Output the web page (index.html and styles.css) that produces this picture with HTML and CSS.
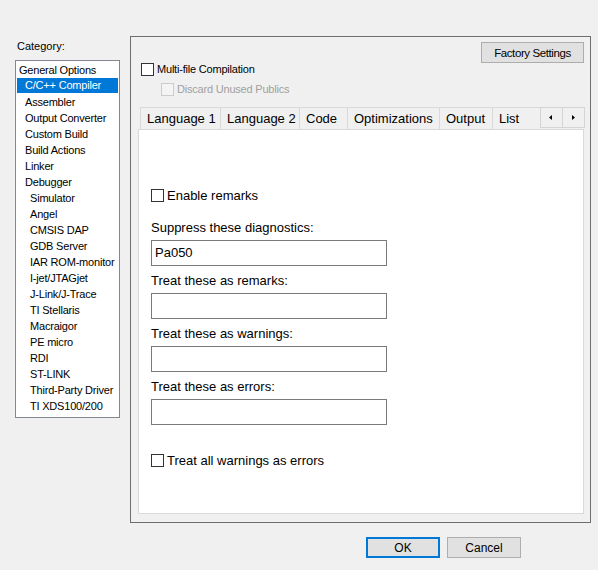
FILE: index.html
```html
<!DOCTYPE html>
<html lang="en">
<head>
  <meta charset="UTF-8" />
  <title>Options for node</title>
  <link rel="stylesheet" href="styles.css">
</head>
<body>
  <div class="dialog">
    <div class="top">
      <div class="category">
        <div class="category-label">Category:</div>
        <ul class="category-list">
          <li>General Options</li>
          <li class="sub selected">C/C++ Compiler</li>
          <li class="sub">Assembler</li>
          <li class="sub">Output Converter</li>
          <li class="sub">Custom Build</li>
          <li class="sub">Build Actions</li>
          <li class="sub">Linker</li>
          <li class="sub">Debugger</li>
          <li class="subsub">Simulator</li>
          <li class="subsub">Angel</li>
          <li class="subsub">CMSIS DAP</li>
          <li class="subsub">GDB Server</li>
          <li class="subsub">IAR ROM-monitor</li>
          <li class="subsub">I-jet/JTAGjet</li>
          <li class="subsub">J-Link/J-Trace</li>
          <li class="subsub">TI Stellaris</li>
          <li class="subsub">Macraigor</li>
          <li class="subsub">PE micro</li>
          <li class="subsub">RDI</li>
          <li class="subsub">ST-LINK</li>
          <li class="subsub">Third-Party Driver</li>
          <li class="subsub">TI XDS100/200</li>
        </ul>
      </div>

      <div class="panel">
        <div class="panel-head">
          <button class="btn factory">Factory Settings</button>
        </div>
        <label class="check small">
          <span class="box"></span>Multi-file Compilation
        </label>
        <label class="check small disabled indent">
          <span class="box"></span>Discard Unused Publics
        </label>

        <div class="tabs">
          <div class="tab-strip">
            <div class="tab w-lang1">Language 1</div>
            <div class="tab w-lang2">Language 2</div>
            <div class="tab w-code">Code</div>
            <div class="tab w-opt">Optimizations</div>
            <div class="tab w-out">Output</div>
            <div class="tab w-list">List</div>
          </div>
          <div class="tab-arrows">
            <span class="arrow">
              <svg width="5" height="5" viewBox="0 0 5 5"><path d="M3 0 L0 2.5 L3 5 Z" fill="#000"/></svg>
            </span>
            <span class="arrow">
              <svg width="5" height="5" viewBox="0 0 5 5"><path d="M1 0 L4 2.5 L1 5 Z" fill="#000"/></svg>
            </span>
          </div>
        </div>

        <div class="tab-page">
          <label class="check first">
            <span class="box"></span>Enable remarks
          </label>

          <div class="field">
            <div class="field-label">Suppress these diagnostics:</div>
            <div class="field-input">Pa050</div>
          </div>
          <div class="field">
            <div class="field-label">Treat these as remarks:</div>
            <div class="field-input"></div>
          </div>
          <div class="field">
            <div class="field-label">Treat these as warnings:</div>
            <div class="field-input"></div>
          </div>
          <div class="field">
            <div class="field-label">Treat these as errors:</div>
            <div class="field-input"></div>
          </div>

          <label class="check last">
            <span class="box"></span>Treat all warnings as errors
          </label>
        </div>
      </div>
    </div>

    <div class="actions">
      <button class="btn ok">OK</button>
      <button class="btn">Cancel</button>
    </div>
  </div>
</body>
</html>
```

FILE: styles.css
```css
* {
  margin: 0;
  padding: 0;
  box-sizing: border-box;
  font-family: 'Liberation Sans', Arial, sans-serif;
}

body {
  width: 598px;
  height: 570px;
  background-color: #f0f0f0;
  color: #000;
  overflow: hidden;
}

.dialog {
  padding-top: 36px;
}

.top {
  display: flex;
  padding-left: 15px;
}

/* category list */
.category {
  width: 105px;
  margin-right: 10px;
  padding-top: 2px;
}

.category-label {
  font-size: 11px;
  line-height: 16px;
  padding-left: 2px;
  margin-bottom: 6px;
}

.category-list {
  list-style: none;
  background-color: #fff;
  border: 1px solid #828790;
  height: 358px;
  padding: 1px 1px 0 1px;
}

.category-list li {
  font-size: 11px;
  letter-spacing: -0.2px;
  line-height: 16px;
  height: 16px;
  padding-left: 2px;
  white-space: nowrap;
}

.category-list li.sub {
  padding-left: 8px;
}

.category-list li.subsub {
  padding-left: 13px;
}

.category-list li.selected {
  background-color: #0078d7;
  color: #fff;
  height: 15px;
  margin-bottom: 1px;
  line-height: 15px;
}

/* main panel */
.panel {
  width: 461px;
  height: 487px;
  border: 1px solid #6e6e6e;
  padding: 5px 6px 0 7px;
}

.panel-head {
  display: flex;
  justify-content: flex-end;
  height: 19px;
}

.btn {
  background-color: #e1e1e1;
  border: 1px solid #adadad;
  font-size: 12px;
  height: 21px;
  width: 74px;
  color: #000;
  flex-shrink: 0;
}

.btn.factory {
  width: 103px;
  font-size: 11.5px;
  letter-spacing: -0.4px;
}

.btn.ok {
  border: 2px solid #0078d7;
}

.check {
  display: flex;
  align-items: center;
  height: 16px;
  font-size: 13px;
}

.check .box {
  width: 13px;
  height: 13px;
  border: 1px solid #333;
  background-color: #fff;
  margin-right: 3px;
}

.check.small {
  font-size: 11px;
  letter-spacing: -0.2px;
  margin-left: 3px;
}

.check.indent {
  margin-left: 23px;
  margin-top: 4px;
}

.check.disabled {
  color: #a0a0a0;
}

.check.disabled .box {
  border-color: #cccccc;
  background-color: #f4f4f4;
}

/* tabs */
.tabs {
  display: flex;
  margin-top: 10px;
  margin-left: 2px;
  margin-right: -1px;
  height: 22px;
}

.tab-strip {
  display: flex;
  flex: 1;
  overflow: hidden;
}

.tab {
  flex-shrink: 0;
  height: 22px;
  line-height: 21px;
  font-size: 13px;
  padding-left: 6px;
  border: 1px solid #d9d9d9;
  border-right: none;
  border-bottom: none;
  background-color: #f0f0f0;
  white-space: nowrap;
}

.w-lang1 { width: 80px; }
.w-lang2 { width: 79px; }
.w-code { width: 48px; }
.w-opt { width: 92px; }
.w-out { width: 53px; }
.w-list { width: 48px; }

.tab-arrows {
  display: flex;
  width: 45px;
  height: 21px;
}

.arrow {
  width: 23px;
  height: 21px;
  border: 1px solid #d4d4d4;
  background-color: #f0f0f0;
  display: flex;
  align-items: center;
  justify-content: center;
}

.arrow + .arrow {
  width: 22px;
  border-left: none;
}

.tab-page {
  width: 446px;
  height: 385px;
  background-color: #fff;
  border: 1px solid #d9d9d9;
  padding: 0 0 0 12px;
}

.check.first {
  margin-top: 57px;
  margin-bottom: 17px;
}

.field-label {
  font-size: 13px;
  line-height: 16px;
  height: 16px;
  margin-bottom: 4px;
}

.field-input {
  width: 236px;
  height: 26px;
  border: 1px solid #7a7a7a;
  background-color: #fff;
  font-size: 13px;
  line-height: 24px;
  padding-left: 3px;
}

.field + .field {
  margin-top: 7px;
}

.check.last {
  margin-top: 27px;
}

/* bottom buttons */
.actions {
  display: flex;
  gap: 7px;
  padding-left: 366px;
  margin-top: 14px;
}
```
